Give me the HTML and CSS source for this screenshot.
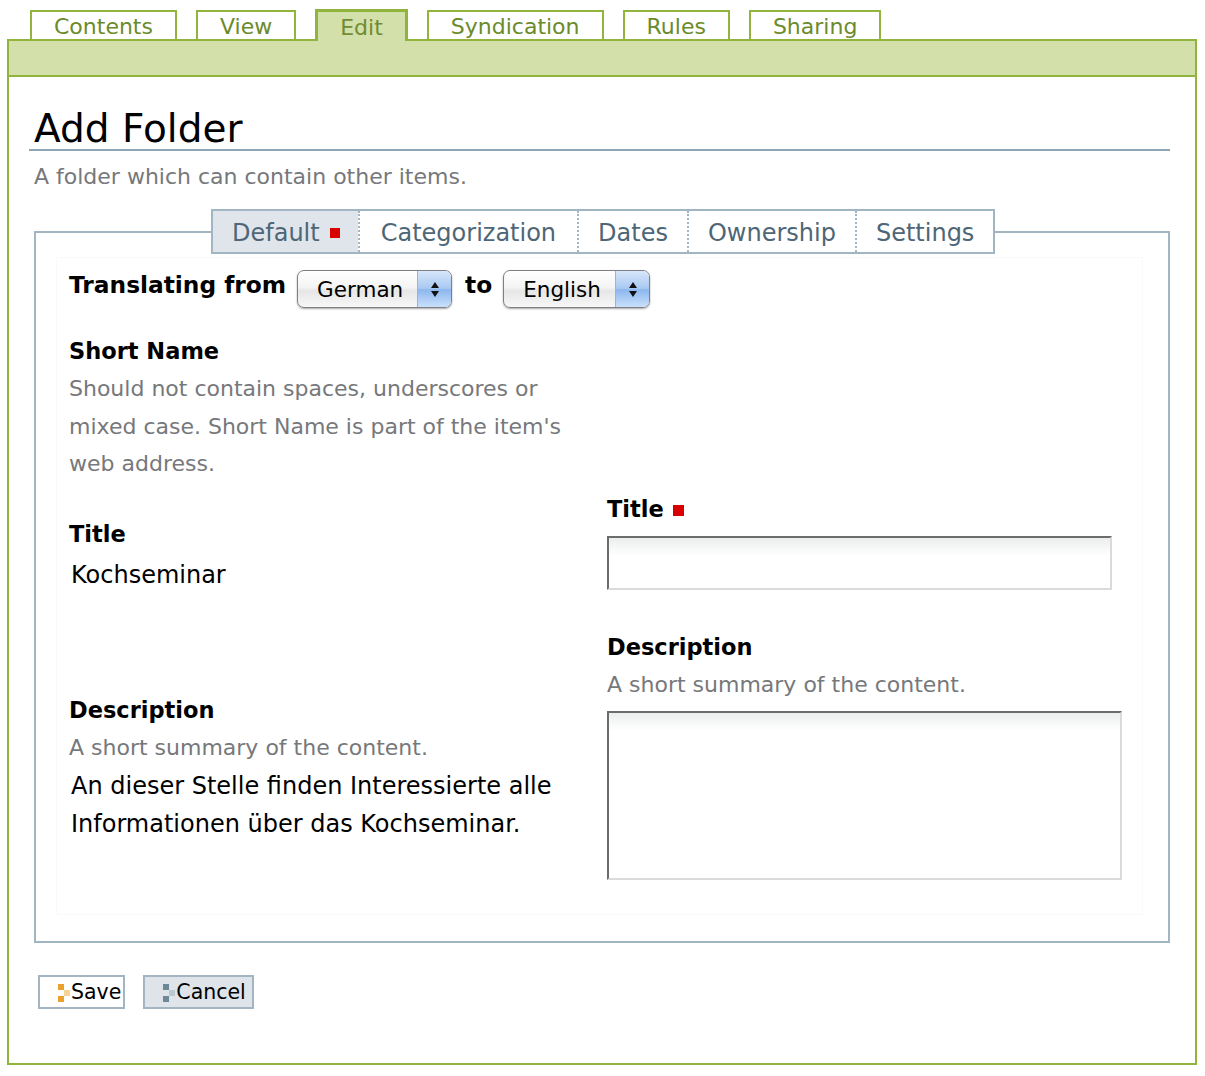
FILE: index.html
```html
<!DOCTYPE html>
<html lang="en">
<head>
<meta charset="utf-8">
<title>Add Folder</title>
<link rel="stylesheet" href="styles.css">
</head>
<body>
<nav class="views">
  <a class="vtab">Contents</a>
  <a class="vtab">View</a>
  <a class="vtab selected">Edit</a>
  <a class="vtab">Syndication</a>
  <a class="vtab">Rules</a>
  <a class="vtab">Sharing</a>
</nav>
<div class="frame">
  <div class="bar"></div>
  <div class="content">
    <h1 class="title">Add Folder</h1>
    <p class="doc-desc">A folder which can contain other items.</p>
    <form class="form">
      <fieldset class="fs">
        <legend class="ftabs">
          <span class="ftab active">Default<span class="req"></span></span>
          <span class="ftab ftab-wide">Categorization</span>
          <span class="ftab">Dates</span>
          <span class="ftab">Ownership</span>
          <span class="ftab">Settings</span>
        </legend>
        <div class="panel">
          <div class="lang-row">
            <span class="lang-label">Translating from</span>
            <span class="select sel-german"><span class="sel-text">German</span><span class="sel-arrows"><span class="up"></span><span class="down"></span></span></span>
            <span class="lang-label">to</span>
            <span class="select sel-english"><span class="sel-text">English</span><span class="sel-arrows"><span class="up"></span><span class="down"></span></span></span>
          </div>
          <div class="cols">
            <div class="col-orig">
              <div class="field">
                <label class="lbl">Short Name</label>
                <div class="help">Should not contain spaces, underscores or mixed case. Short Name is part of the item's web address.</div>
              </div>
              <div class="field">
                <label class="lbl">Title</label>
                <div class="value">Kochseminar</div>
              </div>
              <div class="field field-desc">
                <label class="lbl">Description</label>
                <div class="help">A short summary of the content.</div>
                <div class="value value-desc">An dieser Stelle finden Interessierte alle Informationen über das Kochseminar.</div>
              </div>
            </div>
            <div class="col-trans">
              <div class="field">
                <label class="lbl" for="title">Title<span class="req req-lbl"></span></label>
                <input class="text-input" id="title" type="text">
              </div>
              <div class="field field-tdesc">
                <label class="lbl" for="desc">Description</label>
                <div class="help">A short summary of the content.</div>
                <textarea class="text-area" id="desc"></textarea>
              </div>
            </div>
          </div>
        </div>
      </fieldset>
      <div class="actions">
        <button class="btn btn-save" type="button"><svg class="btn-ico" width="12" height="18" viewBox="0 0 12 18"><rect x="0" y="0" width="6" height="6" fill="#eba12e"/><rect x="6" y="6" width="6" height="6" fill="#f8d396"/><rect x="0" y="12" width="6" height="6" fill="#eba12e"/></svg>Save</button>
        <button class="btn btn-cancel" type="button"><svg class="btn-ico" width="12" height="18" viewBox="0 0 12 18"><rect x="0" y="0" width="6" height="6" fill="#6d8998"/><rect x="6" y="6" width="6" height="6" fill="#b9c9d2"/><rect x="0" y="12" width="6" height="6" fill="#6d8998"/></svg>Cancel</button>
      </div>
    </form>
  </div>
</div>
</body>
</html>
```

FILE: styles.css
```css
* { box-sizing: border-box; }

html, body {
  margin: 0;
  background: #fff;
}

body {
  font-family: "DejaVu Sans", "Bitstream Vera Sans", sans-serif;
  color: #000;
  padding: 10px 8px 11px 7px;
}

/* top view tabs */
.views {
  display: flex;
  align-items: flex-end;
  gap: 19px;
  height: 29px;
  padding-left: 23px;
}

.vtab {
  display: block;
  height: 29px;
  padding: 3px 22px 0;
  border: 2px solid #90b43c;
  border-bottom: none;
  background: #fff;
  color: #6b8b2b;
  font-size: 22px;
  line-height: 24px;
  text-decoration: none;
  white-space: nowrap;
}

.vtab.selected {
  position: relative;
  height: 32px;
  margin-bottom: -2px;
  padding-top: 4px;
  border-width: 3px;
  border-bottom: none;
  background: #d3e0a9;
  color: #6f8c35;
}

.frame {
  border: 2px solid #90b43c;
}

.bar {
  height: 36px;
  background: #d3e0a9;
  border-bottom: 2px solid #90b43c;
}

.content {
  padding: 32px 25px 54px 25px;
}

.title {
  margin: 0 0 0 -5px;
  padding-left: 5px;
  font-size: 39px;
  font-weight: normal;
  line-height: 40px;
  border-bottom: 2px solid #8fa6b4;
}

.doc-desc {
  margin: 7px 0 0;
  font-size: 22px;
  line-height: 38px;
  color: #76787b;
}

/* fieldset with tabs */
.fs {
  margin: 13px 0 0;
  padding: 0;
  border: 2px solid #a2b5c3;
  min-width: 0;
}

.ftabs {
  display: flex;
  margin-left: 175px;
  padding: 0;
  border: 2px solid #a2b5c3;
  background: #fff;
}

.ftab {
  display: flex;
  align-items: center;
  padding: 3px 19px 0;
  height: 41px;
  font-size: 24px;
  line-height: 38px;
  color: #4e6675;
  border-left: 2px dotted #a2b5c3;
  white-space: nowrap;
}

.ftab:first-child { border-left: none; padding-right: 18px; }

.ftab.ftab-wide { padding-left: 21px; padding-right: 21px; }

.ftab.active { background: #dfe5eb; }

.req {
  display: inline-block;
  width: 10px;
  height: 10px;
  margin-left: 10px;
  background: #d90000;
}

.req-lbl {
  width: 11px;
  height: 11px;
  margin-left: 9px;
  vertical-align: 1px;
}

.panel {
  margin: 3px 25px 26px 20px;
  padding: 12px 12px 34px 12px;
  border: 1px solid #f9f9f9;
}

/* language row */
.lang-row {
  display: flex;
  align-items: flex-start;
  height: 38px;
}

.lang-label {
  font-size: 23.3px;
  font-weight: bold;
  line-height: 30px;
  white-space: nowrap;
}

.select {
  display: flex;
  height: 38px;
  border: 1px solid #7f7f86;
  border-radius: 7px;
  overflow: hidden;
  background: linear-gradient(#ffffff, #f4f4f4 45%, #e6e6e6 55%, #f7f7f7);
  box-shadow: 0 1px 2px rgba(0, 0, 0, 0.35);
}

.sel-german { width: 155px; margin: 0 13px 0 11px; }
.sel-english { width: 147px; margin-left: 11px; }

.sel-text {
  flex: 1;
  padding-left: 19px;
  font-size: 21.5px;
  line-height: 38px;
  white-space: nowrap;
}

.sel-arrows {
  display: flex;
  flex-direction: column;
  align-items: center;
  justify-content: center;
  gap: 3px;
  width: 34px;
  border-left: 1px solid #9bb3d6;
  background: linear-gradient(#d7e6fa, #a9c9f2 48%, #8db7ef 52%, #c9e0fb);
}

.up, .down {
  width: 0;
  height: 0;
  border-left: 4px solid transparent;
  border-right: 4px solid transparent;
}
.up { border-bottom: 6px solid #111; }
.down { border-top: 6px solid #111; }

/* two columns */
.cols {
  display: grid;
  grid-template-columns: 510px 1fr;
  column-gap: 28px;
  margin-top: 24px;
}

.field + .field { margin-top: 32.5px; }

.lbl {
  display: block;
  font-size: 22.5px;
  font-weight: bold;
  line-height: 38px;
}

.help {
  font-size: 22px;
  line-height: 37.5px;
  color: #76787b;
}

.value {
  margin-top: 2px;
  padding-left: 2px;
  font-size: 24px;
  line-height: 40px;
}

.col-orig .field-desc { margin-top: 95.5px; }

.value-desc {
  margin-top: 1px;
  line-height: 38px;
}

.col-trans { padding-top: 158px; }

.col-trans .field-tdesc { margin-top: 38px; }

.text-input,
.text-area {
  display: block;
  border-style: solid;
  border-width: 2px;
  border-color: #6c6c6c #dadada #dadada #6c6c6c;
  background: linear-gradient(#eceeee, #ffffff 18px);
  font-family: inherit;
  font-size: 22px;
  outline: none;
  resize: none;
}

.text-input {
  width: 505px;
  height: 54px;
  margin-top: 8px;
}

.text-area {
  width: 515px;
  height: 169px;
  margin-top: 7.5px;
}

/* buttons */
.actions {
  display: flex;
  gap: 18px;
  margin-top: 32px;
  padding-left: 4px;
}

.btn {
  display: flex;
  align-items: center;
  height: 34px;
  padding: 0 2px 0 18px;
  border: 2px solid #a3b5c3;
  background: #fff;
  font-family: inherit;
  font-size: 20.5px;
  color: #000;
  line-height: 30px;
}

.btn-cancel {
  background: #dfe4ea;
  padding-left: 18px;
  padding-right: 6px;
}

.btn-ico {
  display: block;
  margin: 1px 1px 0 0;
}
```
